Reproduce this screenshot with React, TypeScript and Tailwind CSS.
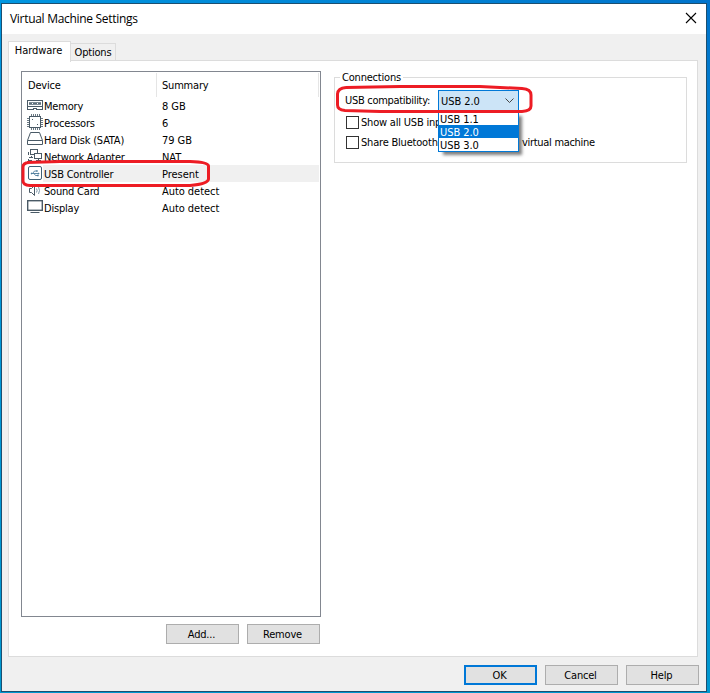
import React, { useState } from 'react';

type IconProps = { name: string };

function DeviceIcon({ name }: IconProps) {
  return (
    <svg width="16" height="16" viewBox="0 0 16 16" fill="none" stroke="#4a5a66" shapeRendering="crispEdges" className="shrink-0 self-start">
      {name === 'memory' && (
        <>
          <rect x="0.5" y="3.5" width="15" height="6" fill="#fff" />
          <path d="M2 5.5h12M2 7.5h12" stroke="#7d8b95" />
          <path d="M2 6.5h3M6 6.5h4M11 6.5h3" stroke="#5d6e7b" />
          <path d="M0.5 10v3M15.5 10v3M0 12.5h6M10 12.5h6M6.5 11v2M9.5 11v2M7 11.5h2" />
        </>
      )}
      {name === 'cpu' && (
        <>
          <rect x="2.5" y="2.5" width="11" height="11" />
          <path d="M4.5 0v2M6.5 0v2M8.5 0v2M10.5 0v2M12.5 0v2M4.5 14v2M6.5 14v2M8.5 14v2M10.5 14v2M12.5 14v2M0 4.5h2M0 6.5h2M0 8.5h2M0 10.5h2M0 12.5h2M14 4.5h2M14 6.5h2M14 8.5h2M14 10.5h2M14 12.5h2" stroke="#6a7882" />
          <path d="M5 5.5h1M10 10.5h1" strokeWidth="1.5" />
        </>
      )}
      {name === 'disk' && (
        <g shapeRendering="auto">
          <path d="M3.5 1.5h9l3 8v4h-15v-4z" />
          <path d="M0.5 9.5h15" />
        </g>
      )}
      {name === 'network' && (
        <>
          <rect x="3.5" y="1.5" width="7" height="5" />
          <rect x="7.5" y="5.5" width="7" height="5" fill="#fff" />
          <path d="M11.5 11v2M9 12.5h5M1 4.5h1M1.5 5v2M4.5 8v2M2 9.5h4M1.5 11v2M2 12.5h3" />
        </>
      )}
      {name === 'usb' && (
        <g shapeRendering="auto">
          <rect x="1.5" y="1.5" width="13" height="13" rx="1.5" stroke="#3f6076" fill="#fff" />
          <path d="M4 8.5h7.5M5.5 8.5l2-2.5h1.5M7 8.5l1.5 2h2" stroke="#4c7c9c" strokeWidth="0.9" />
          <path d="M3.5 8.5l1.5-1.3v2.6zM11 7.5l1.8 1-1.8 1zM9 5.2h1.7v1.6H9zM10 9.7h1.7v1.6h-1.7z" fill="#4c7c9c" stroke="none" />
        </g>
      )}
      {name === 'sound' && (
        <g shapeRendering="auto">
          <path d="M2.5 6.5h2l3-3v10l-3-3h-2z" />
          <path d="M9.5 6.5q1.2 2 0 4M11.5 5q2 3.5 0 7" stroke="#6d8ba0" strokeWidth="0.9" />
        </g>
      )}
      {name === 'display' && (
        <g shapeRendering="auto">
          <rect x="0.7" y="1.7" width="14.6" height="9.6" strokeWidth="1.4" />
          <path d="M3.5 13.5h9" />
        </g>
      )}
    </svg>
  );
}

const DEVICES = [
  { icon: 'memory', name: 'Memory', summary: '8 GB' },
  { icon: 'cpu', name: 'Processors', summary: '6' },
  { icon: 'disk', name: 'Hard Disk (SATA)', summary: '79 GB' },
  { icon: 'network', name: 'Network Adapter', summary: 'NAT' },
  { icon: 'usb', name: 'USB Controller', summary: 'Present' },
  { icon: 'sound', name: 'Sound Card', summary: 'Auto detect' },
  { icon: 'display', name: 'Display', summary: 'Auto detect' },
];

const USB_VERSIONS = ['USB 1.1', 'USB 2.0', 'USB 3.0'];

function PushButton({ label, primary }: { label: string; primary?: boolean }) {
  return (
    <button
      className={`w-[73px] h-[20px] flex items-center justify-center pr-[2px] bg-[#e1e1e1] leading-none ${
        primary ? 'border-2 border-[#0078d7]' : 'border border-[#adadad]'
      }`}
    >
      {label}
    </button>
  );
}

export default function App() {
  const [selected, setSelected] = useState('USB Controller');
  const [version, setVersion] = useState('USB 2.0');

  return (
    <div className="relative w-[710px] h-[693px] pt-[3px] pl-px overflow-hidden bg-[linear-gradient(to_bottom,transparent,#0098d0),linear-gradient(to_right,#0096e0,#0074cc)] font-['DejaVu_Sans_Condensed','DejaVu_Sans',sans-serif] [font-stretch:condensed] text-[11px] tracking-[-0.2px] whitespace-nowrap text-black">
      <div className="w-[706px] h-[689px] border border-[#1c4f70] bg-[#f0f0f0] flex flex-col">
        {/* Title bar */}
        <div className="h-[30px] shrink-0 bg-white flex items-center justify-between pl-2 pr-[9px]">
          <span className="font-['Open_Sans',sans-serif] [font-stretch:normal] text-[12px] tracking-[-0.3px]">Virtual Machine Settings</span>
          <svg width="12" height="12" viewBox="0 0 12 12" stroke="#000" strokeWidth="1.1" className="mb-[2px]">
            <path d="M1 1l10 10M11 1L1 11" />
          </svg>
        </div>

        {/* Tabs */}
        <div className="h-[27px] shrink-0 pl-[6px] flex items-end">
          <div className="relative z-10 w-[63px] h-[21px] -mb-px pb-px pr-[2px] bg-white border border-b-0 border-[#dcdcdc] tracking-[-0.05px] flex items-center justify-center">Hardware</div>
          <div className="w-[45px] h-[18px] border border-l-0 border-b-0 border-[#dcdcdc] pt-[2px] flex items-center justify-center">Options</div>
        </div>

        {/* Tab page */}
        <div className="ml-[6px] w-[690px] h-[597px] -mt-px shrink-0 border border-[#dcdcdc] bg-white flex pl-3 pt-[10px]">
          <div className="w-[300px]">
            <div className="h-[546px] border border-[#828790] px-px">
              <div className="h-[25px] flex items-center pt-px">
                <span className="w-[134px] h-[24px] border-r border-[#e5e5e5] pl-[5px] pt-[3px] flex items-center">Device</span>
                <span className="flex-1 h-[24px] border-r border-[#e5e5e5] pl-[5px] pt-[3px] flex items-center">Summary</span>
              </div>
              {DEVICES.map(d => (
                <div key={d.name} onClick={() => setSelected(d.name)} className="h-[17px] flex items-center pl-1">
                  <DeviceIcon name={d.icon} />
                  <div className={`flex-1 h-full flex items-center pt-[3px] ${selected === d.name ? 'bg-[#f0f0f0]' : ''}`}>
                    <span className="w-[119px] pl-px">{d.name}</span>
                    <span className="tracking-[-0.05px]">{d.summary}</span>
                  </div>
                </div>
              ))}
            </div>
            <div className="flex justify-end gap-2 pt-[7px] pr-px">
              <PushButton label="Add..." />
              <PushButton label="Remove" />
            </div>
          </div>

          <fieldset className="ml-[13px] mt-[6px] w-[353px] h-[86px] border border-[#dcdcdc] relative">
            <span className="absolute left-[5px] -top-[7px] px-[2px] leading-[14px] bg-white">Connections</span>
            <div className="h-[34px] pt-[12px] pl-[10px] flex items-center">
              <span className="w-[93px] tracking-[-0.3px]">USB compatibility:</span>
              <div className="relative">
                <div className="w-[81px] h-[22px] border border-[#0078d7] bg-[#cce4f7] flex items-center justify-between pl-[2px] pr-[4px]">
                  <span className="pt-[2px] tracking-[-0.05px]">{version}</span>
                  <svg width="9" height="6" viewBox="0 0 9 6" fill="none" stroke="#444">
                    <path d="M0.5 0.5l4 4 4-4" />
                  </svg>
                </div>
                <div className="absolute z-10 top-[21px] left-0 w-[81px] h-[41px] border border-[#0078d7] bg-white shadow-[4px_4px_3px_-1px_rgba(0,0,0,0.5)]">
                  {USB_VERSIONS.map(v => (
                    <div
                      key={v}
                      onClick={() => setVersion(v)}
                      className={`h-[13px] pl-px leading-[15px] tracking-[-0.05px] ${v === version ? 'bg-[#0078d7] text-white' : ''}`}
                    >
                      {v}
                    </div>
                  ))}
                </div>
              </div>
            </div>
            <label className="ml-[11px] h-[20px] flex items-center">
              <span className="w-[13px] h-[13px] border border-[#333] mr-[2px]" />
              <span className="pt-[3px]">Show all USB inp</span>
            </label>
            <label className="ml-[11px] h-[20px] flex items-center">
              <span className="w-[13px] h-[13px] border border-[#333] mr-[2px]" />
              <span className="w-[161px] pt-[3px]">Share Bluetooth</span>
              <span className="pt-[3px] tracking-[-0.3px]">virtual machine</span>
            </label>
          </fieldset>
        </div>

        <div className="flex justify-end gap-2 pt-[8px] pr-[7px]">
          <PushButton label="OK" primary />
          <PushButton label="Cancel" />
          <PushButton label="Help" />
        </div>
      </div>

      {/* Red highlights */}
      <svg width="710" height="693" className="absolute inset-0 z-20 pointer-events-none" fill="none" stroke="#ed1c24" strokeWidth="3">
        <path d="M27 162.5L60 161.5H190Q208 162 208.5 166V179Q208 184 190 185.5H30Q23 185 23 181V167Q23 163 29 162.5" />
        <path d="M346 87.5L400 86.5H480L522 88.5Q531 89 531 95V106Q531 111 522 111.5H380L345 110.5Q337 110 337.5 104V94Q338 88 346 87.5" />
      </svg>
    </div>
  );
}
